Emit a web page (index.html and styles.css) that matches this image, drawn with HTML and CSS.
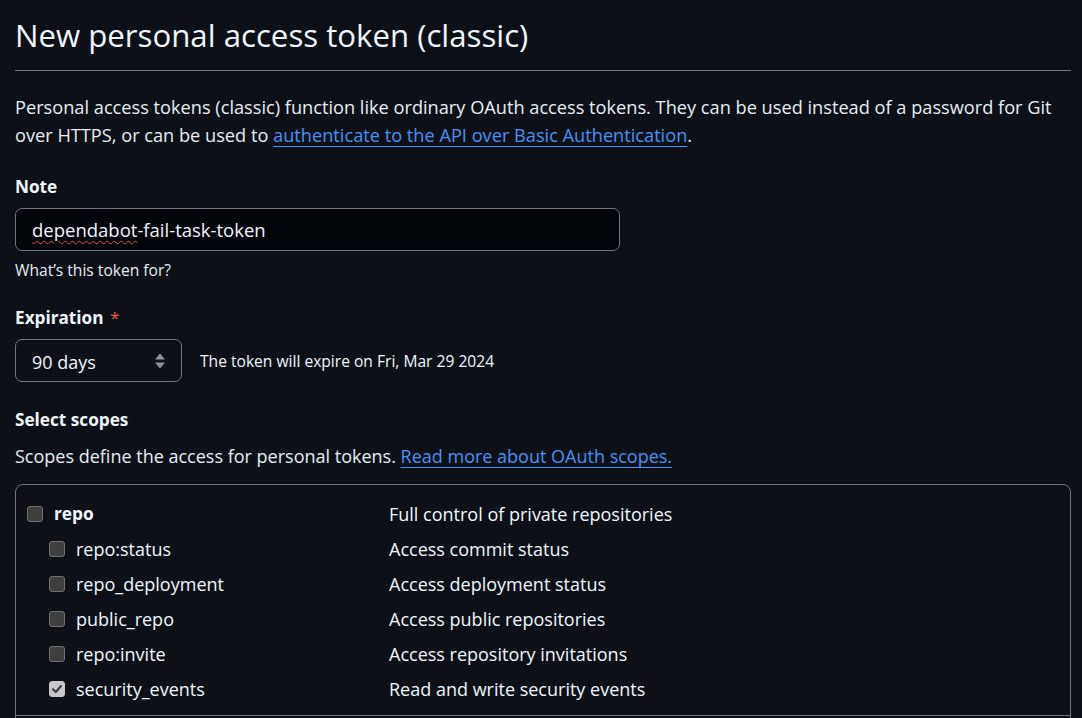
FILE: index.html
```html
<!DOCTYPE html>
<html lang="en">
<head>
<meta charset="utf-8">
<title>New personal access token (classic)</title>
<link rel="stylesheet" href="styles.css">
</head>
<body>
<main class="page">
  <div class="subhead">
    <h1 class="subhead-heading">New personal access token (classic)</h1>
  </div>
  <p class="intro">Personal access tokens (classic) function like ordinary OAuth access tokens. They can be used instead of a password for Git over HTTPS, or can be used to <a href="#" class="link">authenticate to the API over Basic Authentication</a>.</p>

  <div class="form-group">
    <label class="label">Note</label>
    <div class="text-input"><span class="misspelled">dependabot</span>-fail-task-token</div>
    <p class="note">What’s this token for?</p>
  </div>

  <div class="form-group expiration">
    <label class="label">Expiration <span class="required">*</span></label>
    <div class="exp-row">
      <div class="select">
        <span>90 days</span>
        <svg class="select-arrows" width="12" height="18" viewBox="0 0 12 18" aria-hidden="true">
          <path d="M6 1.5 L11 7.5 H1 Z" fill="#8b949e"/>
          <path d="M6 16.5 L11 10.5 H1 Z" fill="#8b949e"/>
        </svg>
      </div>
      <span class="exp-text">The token will expire on Fri, Mar 29 2024</span>
    </div>
  </div>

  <div class="form-group scopes">
    <label class="label">Select scopes</label>
    <p class="scopes-desc">Scopes define the access for personal tokens. <a href="#" class="link">Read more about OAuth scopes.</a></p>
    <div class="scope-box">
      <div class="scope-group">
        <div class="scope-row">
          <div class="scope-name parent"><span class="cb"></span><strong>repo</strong></div>
          <div class="scope-desc">Full control of private repositories</div>
        </div>
        <div class="scope-row">
          <div class="scope-name child"><span class="cb"></span>repo:status</div>
          <div class="scope-desc">Access commit status</div>
        </div>
        <div class="scope-row">
          <div class="scope-name child"><span class="cb"></span>repo_deployment</div>
          <div class="scope-desc">Access deployment status</div>
        </div>
        <div class="scope-row">
          <div class="scope-name child"><span class="cb"></span>public_repo</div>
          <div class="scope-desc">Access public repositories</div>
        </div>
        <div class="scope-row">
          <div class="scope-name child"><span class="cb"></span>repo:invite</div>
          <div class="scope-desc">Access repository invitations</div>
        </div>
        <div class="scope-row">
          <div class="scope-name child"><span class="cb checked"><svg width="12" height="12" viewBox="0 0 12 12" aria-hidden="true"><path d="M2 6.3 L4.8 9 L10 3" fill="none" stroke="#3a3a3a" stroke-width="2" stroke-linecap="round" stroke-linejoin="round"/></svg></span>security_events</div>
          <div class="scope-desc">Read and write security events</div>
        </div>
      </div>
    </div>
  </div>
</main>
</body>
</html>
```

FILE: styles.css
```css
html, body {
  margin: 0;
  padding: 0;
  background: #0d1117;
}

body {
  font-family: "Open Sans", "Noto Sans", "Liberation Sans", sans-serif;
  font-size: 18px;
  color: #e6edf3;
  overflow: hidden;
  height: 718px;
}

.page {
  padding: 0 11px 0 15px;
}

.subhead {
  margin-top: 15px;
  padding-bottom: 15px;
  border-bottom: 1px solid #6e7681;
}

.subhead-heading {
  margin: 0;
  font-size: 31.2px;
  font-weight: 400;
  line-height: 40px;
  color: #f0f6fc;
}

.intro {
  margin: 22px 0 0;
  font-size: 18.2px;
  line-height: 28px;
}

.link {
  color: #4493f8;
  text-decoration: underline;
  text-underline-offset: 4px;
  text-decoration-thickness: 1px;
}

.form-group {
  margin-top: 25px;
}

.label {
  display: block;
  font-size: 17.2px;
  font-weight: 700;
  line-height: 26px;
  color: #f0f6fc;
}

.required {
  color: #f85149;
  font-weight: 400;
  margin-left: 2px;
}

.text-input {
  box-sizing: border-box;
  margin-top: 8px;
  width: 605px;
  height: 43px;
  padding: 0 16px;
  display: flex;
  align-items: center;
  background: #010409;
  border: 1px solid #6e7681;
  border-radius: 7px;
  color: #f0f6fc;
  font-size: 18.5px;
}

.misspelled {
  text-decoration: underline wavy #e5534b;
  text-decoration-thickness: 1px;
  text-underline-offset: 3px;
}

.note {
  margin: 10px 0 0;
  font-size: 15.6px;
  line-height: 18px;
  color: #e6edf3;
}

.expiration {
  margin-top: 26px;
}

.exp-row {
  display: flex;
  align-items: center;
  gap: 18px;
  margin-top: 8px;
}

.select {
  box-sizing: border-box;
  width: 167px;
  height: 43px;
  padding: 0 15px 0 16px;
  display: flex;
  align-items: center;
  justify-content: space-between;
  background: #0d1117;
  border: 1px solid #6e7681;
  border-radius: 7px;
  color: #f0f6fc;
}

.select span {
  padding-top: 2px;
}

.exp-text {
  font-size: 15.6px;
  color: #f0f6fc;
}

.scopes {
  margin-top: 25px;
}

.scopes-desc {
  margin: 10px 0 0;
  line-height: 26px;
}

.scope-box {
  margin-top: 15px;
  border: 1px solid #6e7681;
  border-radius: 8px;
  overflow: hidden;
  height: 400px;
}

.scope-group {
  padding: 11px 0 9px;
  border-bottom: 1px solid #6e7681;
}

.scope-row {
  display: grid;
  grid-template-columns: 362px 1fr;
  height: 35px;
  align-items: center;
  padding-left: 11px;
}

.scope-name {
  display: flex;
  align-items: center;
  gap: 11px;
  color: #f0f6fc;
}

.scope-name.child {
  padding-left: 22px;
}

.scope-name strong {
  font-size: 17.3px;
  font-weight: 700;
}

.scope-desc {
  color: #f0f6fc;
}

.cb {
  box-sizing: border-box;
  width: 16px;
  height: 16px;
  border-radius: 3px;
  background: #3f3f3f;
  border: 1px solid #707070;
  display: inline-flex;
  align-items: center;
  justify-content: center;
  flex: none;
}

.cb.checked {
  background: #c8c8c8;
  border-color: #c8c8c8;
}
```
